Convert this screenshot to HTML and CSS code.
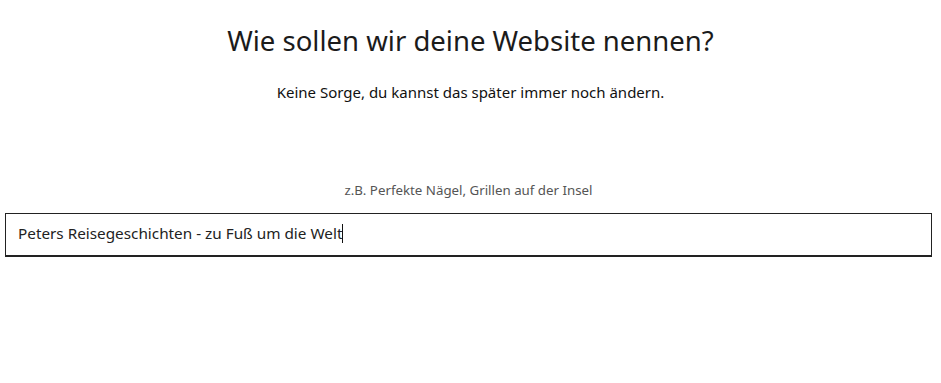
FILE: index.html
```html
<!DOCTYPE html>
<html lang="de">
<head>
<meta charset="utf-8">
<link rel="stylesheet" href="styles.css">
</head>
<body>
<main class="page">
  <h1 class="title">Wie sollen wir deine Website nennen?</h1>
  <p class="subtitle">Keine Sorge, du kannst das später immer noch ändern.</p>
  <div class="field">
    <label class="hint" for="site">z.B. Perfekte Nägel, Grillen auf der Insel</label>
    <div class="input"><span class="value">Peters Reisegeschichten - zu Fuß um die Welt</span><span class="caret"></span></div>
  </div>
</main>
</body>
</html>
```
FILE: styles.css
```css
html, body {
  margin: 0;
  padding: 0;
  background: #fff;
}
body {
  font-family: "Noto Sans", sans-serif;
  color: #111;
}
.page {
  display: flex;
  flex-direction: column;
  align-items: center;
  padding-top: 21px;
}
.title {
  margin: 0;
  font-size: 27.5px;
  font-weight: 400;
  line-height: 40px;
  color: #1b1b1b;
}
.subtitle {
  margin: 20px 0 0;
  font-size: 15px;
  line-height: 22px;
  color: #111;
}
.field {
  align-self: stretch;
  margin: 78px 9px 0 5px;
  display: flex;
  flex-direction: column;
  align-items: center;
}
.hint {
  font-size: 13.3px;
  line-height: 18px;
  color: #555;
}
.input {
  margin-top: 14px;
  align-self: stretch;
  height: 44px;
  box-sizing: border-box;
  border: 1px solid #222;
  border-bottom-width: 2px;
  display: flex;
  align-items: center;
  padding: 0 0 3px 12px;
  font-size: 15.3px;
  color: #222;
}
.caret {
  display: inline-block;
  width: 1px;
  height: 19px;
  background: #111;
}
```
